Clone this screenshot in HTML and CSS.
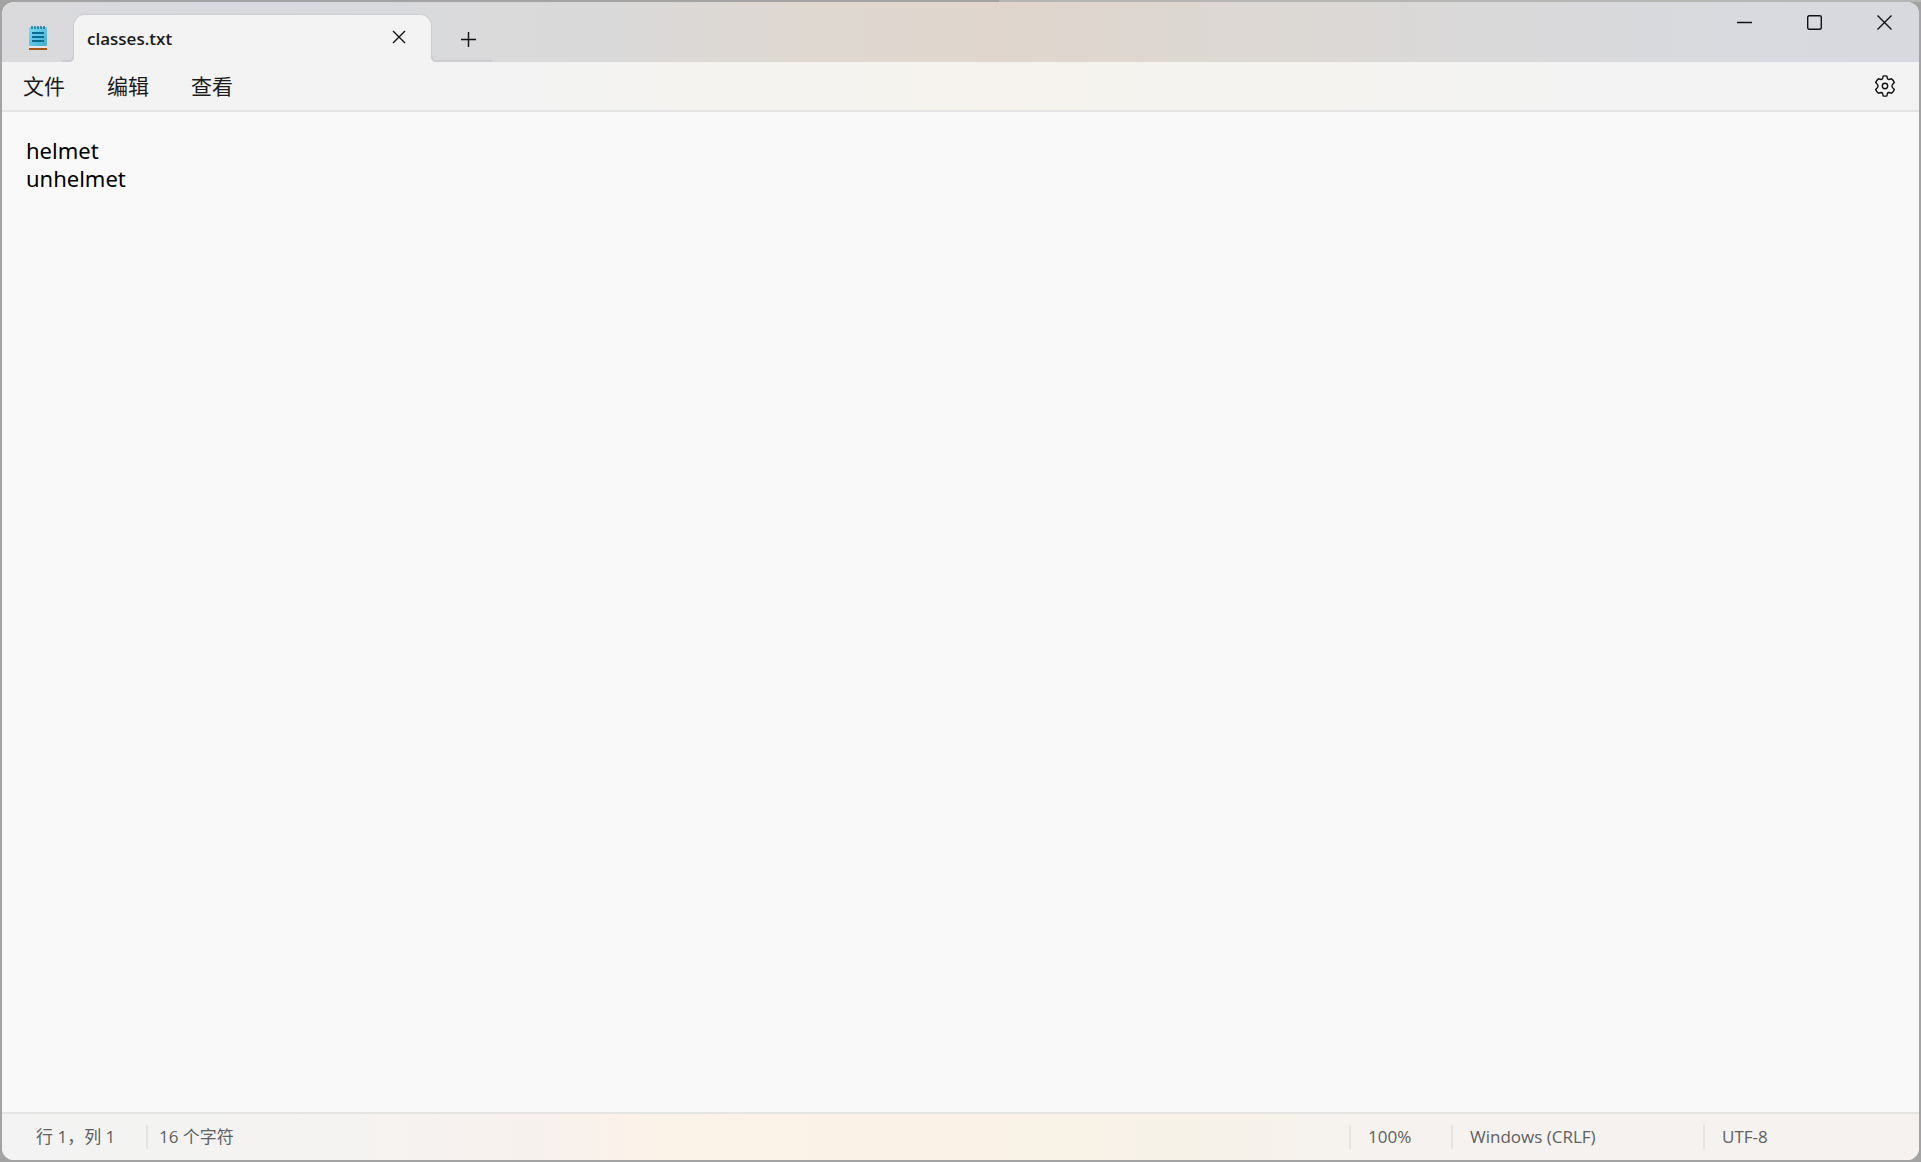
FILE: index.html
```html
<!DOCTYPE html>
<html lang="zh-CN">
<head>
    <meta charset="UTF-8">
    <meta name="viewport" content="width=device-width, initial-scale=1.0">
    <title>classes.txt</title>
    <link rel="stylesheet" href="styles.css">
</head>
<body>
    <div class="window">
        <header class="titlebar">
            <svg class="app-icon" width="18" height="24" viewBox="0 0 18 24" aria-hidden="true">
                <defs>
                    <linearGradient id="page" x1="0" y1="0" x2="1" y2="1">
                        <stop offset="0" stop-color="#7ddcf5"/>
                        <stop offset="1" stop-color="#41aed2"/>
                    </linearGradient>
                </defs>
                <rect y="19" width="18" height="3" fill="#e6e6e6"/>
                <rect y="22" width="18" height="2" fill="#a8560f"/>
                <rect y="1" width="18" height="19" rx="1" fill="url(#page)"/>
                <path d="M3 0v3M6 0v3M9 0v3M12 0v3M15 0v3" stroke="#0f6f93" stroke-width="1.4"/>
                <path d="M3 7h12M3 11h12M3 15h12" stroke="#0b6a90" stroke-width="1.8"/>
            </svg>
            <div class="tab">
                <span class="tab-title">classes.txt</span>
                <button class="icon-btn tab-close" aria-label="关闭标签页">
                    <svg width="14" height="14" viewBox="0 0 14 14"><path d="M1 1l12 12M13 1L1 13"/></svg>
                </button>
            </div>
            <button class="icon-btn new-tab" aria-label="新建标签页">
                <svg width="15" height="15" viewBox="0 0 15 15"><path d="M7.5 0v15M0 7.5h15"/></svg>
            </button>
            <div class="window-buttons">
                <button class="icon-btn" aria-label="最小化">
                    <svg width="15" height="15" viewBox="0 0 15 15"><path d="M0 7.5h15"/></svg>
                </button>
                <button class="icon-btn" aria-label="最大化">
                    <svg width="15" height="15" viewBox="0 0 15 15"><rect x=".7" y=".7" width="13.6" height="13.6" rx="1.5"/></svg>
                </button>
                <button class="icon-btn" aria-label="关闭">
                    <svg width="15" height="15" viewBox="0 0 15 15"><path d="M.5 .5l14 14M14.5 .5l-14 14"/></svg>
                </button>
            </div>
        </header>

        <nav class="menubar">
            <button class="menu-item">文件</button>
            <button class="menu-item">编辑</button>
            <button class="menu-item">查看</button>
            <button class="icon-btn settings" aria-label="设置">
                <svg width="22" height="22" viewBox="0 0 22 22">
                    <path d="M9.1 1.2Q11 .5 12.9 1.2L13.4 3.6Q13.8 4.6 14.9 4.5L17.6 3.8Q19.5 5.1 20.3 7.5L18.6 9.4Q17.4 11 18.6 12.6L20.3 14.5Q19.5 16.9 17.6 18.2L14.9 17.5Q13.8 17.4 13.4 18.4L12.9 20.8Q11 21.5 9.1 20.8L8.6 18.4Q8.2 17.4 7.1 17.5L4.4 18.2Q2.5 16.9 1.7 14.5L3.4 12.6Q4.6 11 3.4 9.4L1.7 7.5Q2.5 5.1 4.4 3.8L7.1 4.5Q8.2 4.6 8.6 3.6Z"/>
                    <circle cx="11" cy="11" r="2.7"/>
                </svg>
            </button>
        </nav>

        <textarea class="editor" aria-label="文本编辑器" spellcheck="false">helmet
unhelmet</textarea>

        <footer class="statusbar">
            <span class="status position">行 1，列 1</span>
            <span class="status count">16 个字符</span>
            <span class="status zoom">100%</span>
            <span class="status eol">Windows (CRLF)</span>
            <span class="status encoding">UTF-8</span>
        </footer>
    </div>
</body>
</html>
```

FILE: styles.css
```css
* {
    margin: 0;
    padding: 0;
    box-sizing: border-box;
}

body {
    height: 100vh;
    padding: 2px;
    background: linear-gradient(90deg, #a2a2a2 52%, #b6b6b5 52%) top / 100% 2px no-repeat, #a3a3a3;
    font-family: "Open Sans", "Noto Sans CJK SC", sans-serif;
    color: #1b1b1b;
    overflow: hidden;
}

button {
    border: none;
    background: none;
    font: inherit;
    color: inherit;
}

.window {
    height: 100%;
    display: flex;
    flex-direction: column;
    border-radius: 12px;
    overflow: hidden;
    background: #f9f9f9;
}

/* title bar */
.titlebar {
    height: 60px;
    display: flex;
    align-items: flex-end;
    background: linear-gradient(90deg, #dadadc 0%, #d7d9df 14%, #dadadb 26%, #dad9d9 32%, #dfd8d1 42%, #e0d6cd 52%, #ddd8d3 64%, #dad9d9 76%, #d8dadf 92%, #d8d9df 100%);
}

.app-icon {
    margin: 0 26px 12px 27px;
}

.tab {
    position: relative;
    width: 359px;
    height: 48px;
    display: flex;
    align-items: center;
    justify-content: space-between;
    padding: 0 20px 0 13px;
    background: #f3f3f3;
    border: 1px solid #cdcdd1;
    border-bottom: none;
    border-radius: 12px 12px 0 0;
}

/* curved feet on both sides of the tab */
.tab::before,
.tab::after {
    content: "";
    position: absolute;
    bottom: 0;
    height: 6px;
}

.tab::before {
    right: 100%;
    width: 12px;
    background: radial-gradient(circle at 0 0, transparent 4px, #cdcdd1 5px, #cdcdd1 6px, #f3f3f3 7px) right / 6px 6px no-repeat,
                linear-gradient(#cdcdd1, #cdcdd1) bottom left / 6px 2px no-repeat;
}

.tab::after {
    left: 100%;
    width: 61px;
    background: radial-gradient(circle at 100% 0, transparent 4px, #cdcdd1 5px, #cdcdd1 6px, #f3f3f3 7px) left / 6px 6px no-repeat,
                linear-gradient(#cdcdd1, #cdcdd1) bottom right / 55px 2px no-repeat;
}

.tab-title {
    font-size: 17px;
    font-weight: 600;
}

.icon-btn {
    display: flex;
    align-items: center;
    justify-content: center;
}

.icon-btn svg {
    fill: none;
    stroke: #111;
    stroke-width: 1.4;
}

.tab-close {
    width: 24px;
    height: 24px;
    margin-bottom: 4px;
}

.new-tab {
    width: 48px;
    height: 46px;
    margin-left: 12px;
}

.window-buttons {
    display: flex;
    align-self: flex-start;
    margin-left: auto;
}

.window-buttons .icon-btn {
    width: 70px;
    height: 40px;
}

/* menu */
.menubar {
    height: 50px;
    display: flex;
    align-items: center;
    border-bottom: 2px solid #e5e5e5;
    background: linear-gradient(90deg, #f3f3f3 28%, #f4f3f0 36%, #f6f3ee 52%, #f4f3f0 68%, #f3f3f3 82%);
}

.menu-item {
    padding: 0 21px;
    font-size: 21px;
    line-height: 28px;
}

.settings {
    width: 68px;
    height: 48px;
    margin-left: auto;
}

/* text area */
.editor {
    flex: 1;
    width: 100%;
    padding: 24px;
    border: none;
    outline: none;
    resize: none;
    background: #f9f9f9;
    color: #000;
    font-family: "Noto Sans", "Noto Sans CJK SC", sans-serif;
    font-size: 22px;
    line-height: 28px;
}

/* status bar */
.statusbar {
    height: 48px;
    display: flex;
    align-items: center;
    border-top: 2px solid #e5e5e3;
    background: linear-gradient(90deg, #f3f3f3 0%, #f4f3f2 15%, #f7f1ed 28%, #fbf2e8 34%, #faf2e6 52%, #f6f2e8 62%, #f6f2ef 71%, #f6f2ef 100%);
    font-size: 17px;
    line-height: 24px;
    color: #5f5f5f;
}

.status {
    padding-left: 17px;
    border-left: 2px solid #e6e4e2;
    white-space: nowrap;
}

.position {
    width: 144px;
    padding-left: 34px;
    border-left: none;
}

.count {
    padding-left: 11px;
}

.zoom {
    width: 102px;
    margin-left: auto;
}

.eol {
    width: 252px;
}

.encoding {
    width: 216px;
}
```
